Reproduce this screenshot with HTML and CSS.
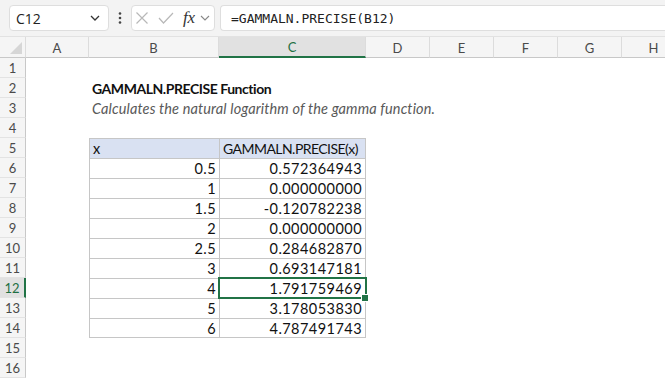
FILE: index.html
```html
<!DOCTYPE html>
<html>
<head>
<meta charset="utf-8">
<link rel="stylesheet" href="styles.css">
</head>
<body>
<div class="app">
  <div class="topbar">
    <div class="namebox">
      <span class="nb-text">C12</span>
      <svg class="chev" width="10" height="6" viewBox="0 0 10 6"><path d="M1 1 L5 5 L9 1" fill="none" stroke="#333" stroke-width="1.3"/></svg>
    </div>
    <div class="dots">
      <svg width="4" height="14" viewBox="0 0 4 14"><circle cx="2" cy="2.5" r="1.3" fill="#444"/><circle cx="2" cy="7" r="1.3" fill="#444"/><circle cx="2" cy="11.5" r="1.3" fill="#444"/></svg>
    </div>
    <div class="fxbox">
      <svg class="ic-x" width="12" height="12" viewBox="0 0 12 12"><path d="M0.5 0.5 L11.5 11.5 M11.5 0.5 L0.5 11.5" stroke="#b8b8b8" stroke-width="1.2" fill="none"/></svg>
      <svg class="ic-ok" width="16" height="12" viewBox="0 0 16 12"><path d="M1 6 L5.5 11 L15 1" stroke="#b8b8b8" stroke-width="1.2" fill="none"/></svg>
      <span class="fx">fx</span>
      <svg class="chev2" width="10" height="6" viewBox="0 0 10 6"><path d="M1 1 L5 5 L9 1" fill="none" stroke="#888" stroke-width="1.1"/></svg>
    </div>
    <div class="formula">=GAMMALN.PRECISE(B12)</div>
  </div>

  <div class="sheet">
    <div class="corner"><svg width="12" height="12" viewBox="0 0 12 12"><path d="M12 0 L12 12 L0 12 Z" fill="#d6d6d6"/></svg></div>
    <div class="ch">A</div>
    <div class="ch">B</div>
    <div class="ch ch-sel">C</div>
    <div class="ch">D</div>
    <div class="ch">E</div>
    <div class="ch">F</div>
    <div class="ch">G</div>
    <div class="ch">H</div>

    <div class="rh">1</div><div class="c"></div><div class="c"></div><div class="c"></div><div class="c"></div><div class="c"></div><div class="c"></div><div class="c"></div><div class="c"></div>
    <div class="rh">2</div><div class="c"></div><div class="c title">GAMMALN.PRECISE Function</div><div class="c"></div><div class="c"></div><div class="c"></div><div class="c"></div><div class="c"></div><div class="c"></div>
    <div class="rh">3</div><div class="c"></div><div class="c subtitle">Calculates the natural logarithm of the gamma function.</div><div class="c"></div><div class="c"></div><div class="c"></div><div class="c"></div><div class="c"></div><div class="c"></div>
    <div class="rh">4</div><div class="c"></div><div class="c"></div><div class="c"></div><div class="c"></div><div class="c"></div><div class="c"></div><div class="c"></div><div class="c"></div>
    <div class="rh">5</div><div class="c"></div><div class="c t tl th">x</div><div class="c t tr th hdr">GAMMALN.PRECISE(x)</div><div class="c"></div><div class="c"></div><div class="c"></div><div class="c"></div><div class="c"></div>
    <div class="rh">6</div><div class="c"></div><div class="c t tl num">0.5</div><div class="c t tr num">0.572364943</div><div class="c"></div><div class="c"></div><div class="c"></div><div class="c"></div><div class="c"></div>
    <div class="rh">7</div><div class="c"></div><div class="c t tl num">1</div><div class="c t tr num">0.000000000</div><div class="c"></div><div class="c"></div><div class="c"></div><div class="c"></div><div class="c"></div>
    <div class="rh">8</div><div class="c"></div><div class="c t tl num">1.5</div><div class="c t tr num">-0.120782238</div><div class="c"></div><div class="c"></div><div class="c"></div><div class="c"></div><div class="c"></div>
    <div class="rh">9</div><div class="c"></div><div class="c t tl num">2</div><div class="c t tr num">0.000000000</div><div class="c"></div><div class="c"></div><div class="c"></div><div class="c"></div><div class="c"></div>
    <div class="rh">10</div><div class="c"></div><div class="c t tl num">2.5</div><div class="c t tr num">0.284682870</div><div class="c"></div><div class="c"></div><div class="c"></div><div class="c"></div><div class="c"></div>
    <div class="rh">11</div><div class="c"></div><div class="c t tl num">3</div><div class="c t tr num">0.693147181</div><div class="c"></div><div class="c"></div><div class="c"></div><div class="c"></div><div class="c"></div>
    <div class="rh rh-sel">12</div><div class="c"></div><div class="c t tl num">4</div><div class="c t tr num sel">1.791759469</div><div class="c"></div><div class="c"></div><div class="c"></div><div class="c"></div><div class="c"></div>
    <div class="rh">13</div><div class="c"></div><div class="c t tl num">5</div><div class="c t tr num">3.178053830</div><div class="c"></div><div class="c"></div><div class="c"></div><div class="c"></div><div class="c"></div>
    <div class="rh">14</div><div class="c"></div><div class="c t tl num last">6</div><div class="c t tr num last">4.787491743</div><div class="c"></div><div class="c"></div><div class="c"></div><div class="c"></div><div class="c"></div>
    <div class="rh">15</div><div class="c"></div><div class="c"></div><div class="c"></div><div class="c"></div><div class="c"></div><div class="c"></div><div class="c"></div><div class="c"></div>
    <div class="rh">16</div><div class="c"></div><div class="c"></div><div class="c"></div><div class="c"></div><div class="c"></div><div class="c"></div><div class="c"></div><div class="c"></div>
  </div>
</div>
</body>
</html>
```

FILE: styles.css
```css
* { box-sizing: border-box; }
html, body { margin: 0; padding: 0; }
body {
  width: 665px;
  height: 380px;
  overflow: hidden;
  background: #ffffff;
  font-family: "Lato", "Liberation Sans", sans-serif;
}
.app { width: 665px; height: 380px; overflow: hidden; }

.topbar {
  height: 37px;
  background: #f3f3f3;
  display: flex;
  align-items: flex-start;
  padding: 5px 0 0 9px;
  border-bottom: 1px solid #e2e2e2;
}
.namebox {
  width: 100px;
  height: 26px;
  background: #fff;
  border: 1px solid #dedede;
  border-radius: 4px;
  display: flex;
  align-items: center;
  justify-content: space-between;
  padding: 0 8px 0 6px;
  font-size: 14px;
  color: #222;
  font-family: "Open Sans", sans-serif;
}
.dots {
  width: 22px;
  height: 26px;
  display: flex;
  align-items: center;
  justify-content: center;
}
.fxbox {
  width: 84px;
  height: 26px;
  background: #fff;
  border: 1px solid #dedede;
  border-radius: 4px;
  display: flex;
  align-items: center;
  padding: 0 0 0 4px;
}
.ic-x { margin-right: 10px; }
.ic-ok { margin-right: 9px; }
.fx {
  font-family: "Liberation Serif", serif;
  font-style: italic;
  font-size: 17px;
  color: #333;
  margin-right: 5px;
  letter-spacing: -0.3px;
}
.formula {
  margin-left: 5px;
  flex: 1;
  height: 26px;
  background: #fff;
  border: 1px solid #dedede;
  border-right: none;
  border-radius: 4px 0 0 4px;
  display: flex;
  align-items: center;
  padding-left: 10px;
  font-family: "DejaVu Sans Mono", monospace;
  font-size: 13px;
  color: #222;
}

.sheet {
  display: grid;
  grid-template-columns: 26px 63px 130px 147px 64px 64px 64px 64px 64px;
  grid-template-rows: 21px repeat(16, 20px);
}
.corner {
  background: #f5f5f5;
  border-right: 1px solid #dcdcdc;
  border-bottom: 1px solid #c8c8c8;
  display: flex;
  align-items: flex-end;
  justify-content: flex-end;
  padding: 0 3px 3px 0;
}
.ch {
  background: #f5f5f5;
  border-right: 1px solid #dcdcdc;
  border-bottom: 1px solid #c8c8c8;
  display: flex;
  align-items: center;
  justify-content: center;
  font-size: 13px;
  color: #4a4a4a;
  padding-top: 1px;
}
.ch-sel {
  background: #e1e1e1;
  color: #1e6f43;
  border-bottom: 2px solid #217346;
}
.rh {
  background: #f5f5f5;
  border-right: 1px solid #c8c8c8;
  border-bottom: 1px solid #e3e3e3;
  display: flex;
  align-items: center;
  justify-content: center;
  font-size: 13px;
  color: #4a4a4a;
}
.rh-sel {
  background: #e1e1e1;
  color: #1e6f43;
  border-right: 2px solid #217346;
}
.c {
  position: relative;
  font-size: 14.5px;
  color: #111;
  display: flex;
  align-items: center;
  padding: 0 3px;
  white-space: nowrap;
}
.title { font-weight: bold; font-size: 14px; letter-spacing: -0.45px; }
.subtitle { font-style: italic; color: #595959; letter-spacing: 0.13px; }
.hdr { font-size: 14px; letter-spacing: -0.55px; }
.t { border-top: 1px solid #c6c6c6; }
.tl { border-left: 1px solid #c6c6c6; }
.tr { border-left: 1px solid #c6c6c6; border-right: 1px solid #c6c6c6; }
.last { border-bottom: 1px solid #c6c6c6; }
.th { background: #d9e1f2; }
.num { justify-content: flex-end; letter-spacing: 0.45px; }
.sel {
  outline: 2px solid #217346;
  outline-offset: -1px;
  z-index: 2;
}
.sel::after {
  content: "";
  position: absolute;
  right: -4px;
  bottom: -4px;
  width: 6px;
  height: 6px;
  background: #217346;
  border: 1px solid #fff;
}
```
